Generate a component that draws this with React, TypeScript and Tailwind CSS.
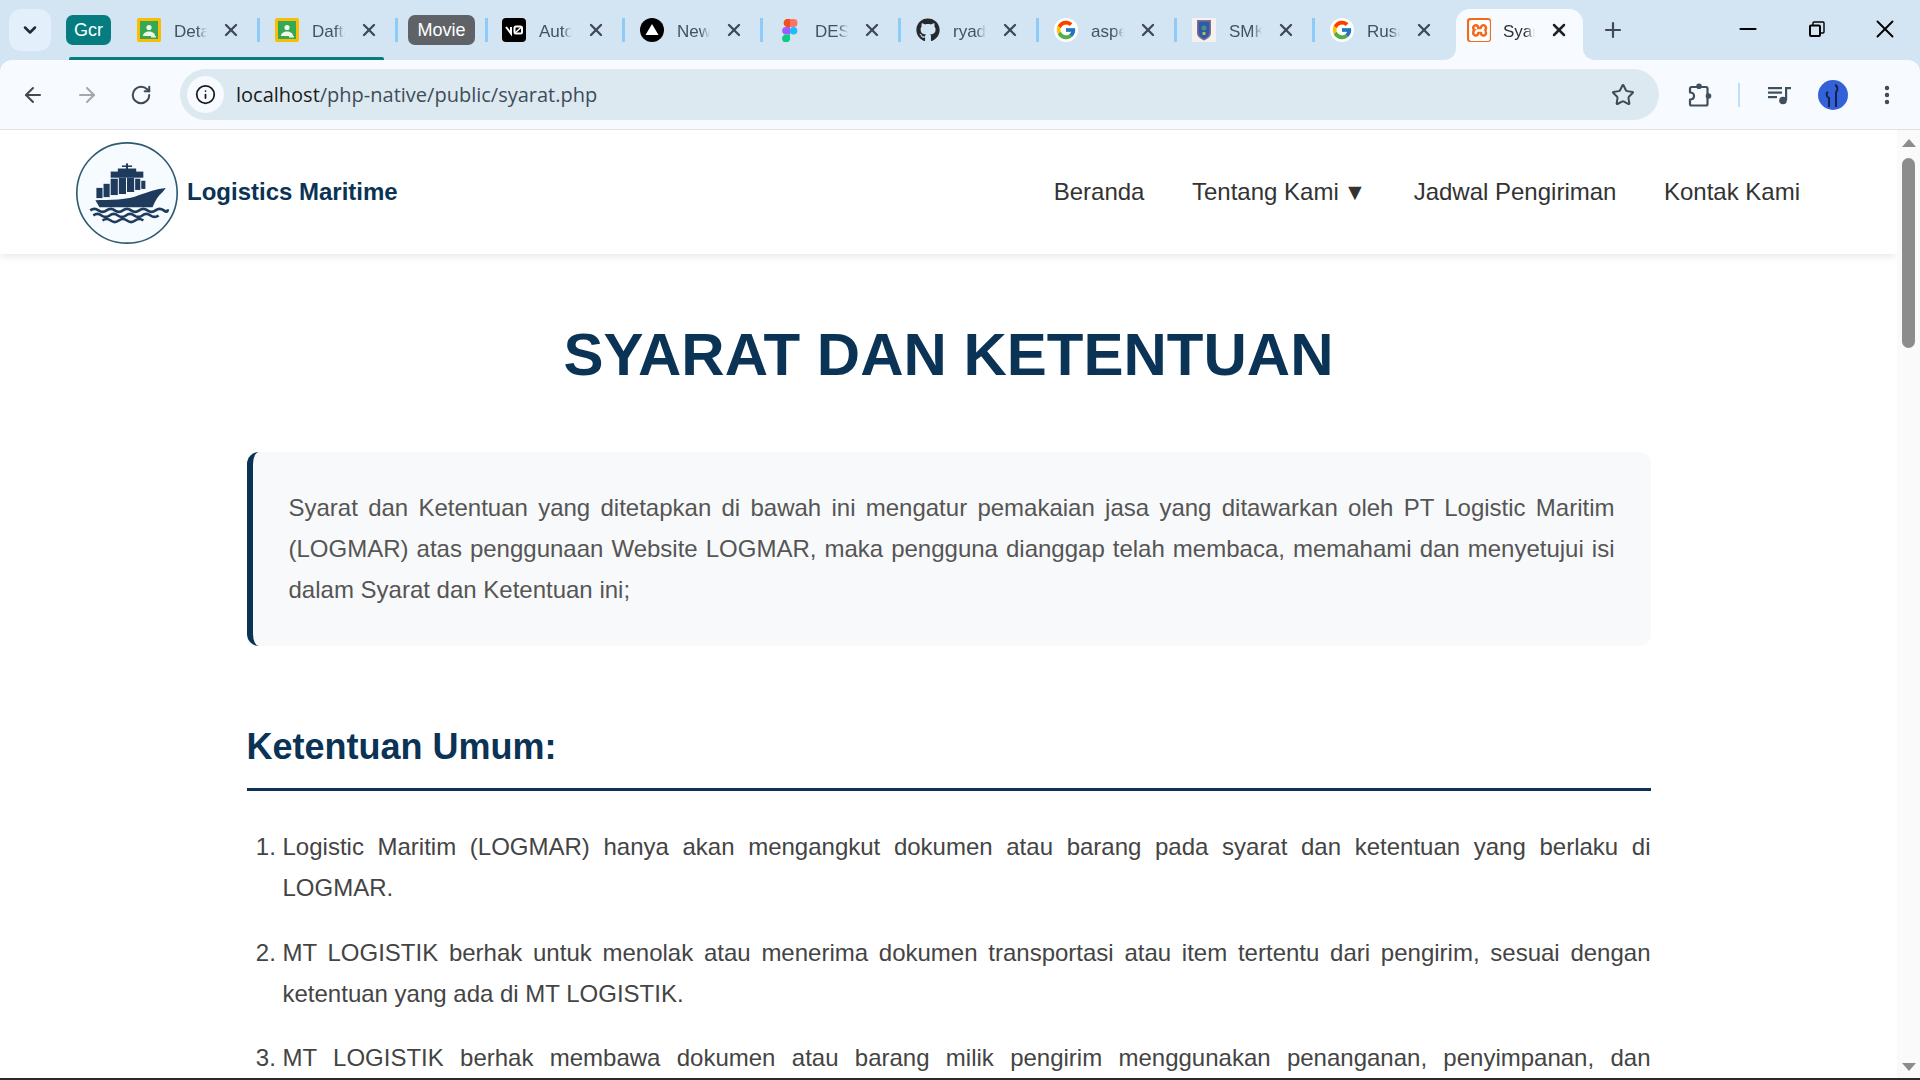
import type React from "react"
import { ArrowLeft, ArrowRight, ChevronDown, EllipsisVertical, Info, Minus, Plus, RotateCw, Star, X } from "lucide-react"
import { FaGithub } from "react-icons/fa"
import { FcGoogle } from "react-icons/fc"
import { SiXampp } from "react-icons/si"

const ClassroomIcon = () => (
  <svg width="24" height="24" viewBox="0 0 24 24">
    <rect x="0" y="0" width="24" height="24" rx="2" fill="#fbbc04" />
    <rect x="3" y="3" width="18" height="18" fill="#34a853" />
    <circle cx="12" cy="9.5" r="2.6" fill="#f1f8e9" />
    <path d="M6 18c0-3 3-4.5 6-4.5s6 1.500 6 4.500z" fill="#f1f8e9" />
    <rect x="14" y="18" width="5" height="1.500" fill="#e8f5e9" />
  </svg>
)

const V0Icon = () => (
  <svg width="24" height="24" viewBox="0 0 24 24">
    <rect width="24" height="24" rx="4" fill="#000" />
    <path d="M4 9l5 6.500V9" fill="none" stroke="#fff" strokeWidth="2" />
    <rect x="12.500" y="8.500" width="7.500" height="7" rx="1.500" fill="none" stroke="#fff" strokeWidth="2" />
    <path d="M13 15l6.500-6" stroke="#fff" strokeWidth="1.500" />
  </svg>
)

const TriangleIcon = () => (
  <svg width="24" height="24" viewBox="0 0 24 24">
    <circle cx="12" cy="12" r="12" fill="#000" />
    <path d="M12 6l6.500 11h-13z" fill="#fff" />
  </svg>
)

const FigmaIcon = () => (
  <svg width="24" height="24" viewBox="0 0 24 24">
    <path d="M12 1H8a4.500 4.500 0 0 0 0 8h4z" fill="#f24e1e" />
    <path d="M12 1h3.500a4 4 0 0 1 0 8H12z" fill="#ff7262" />
    <path d="M12 9H8a3.800 3.800 0 0 0 0 7.600h4z" fill="#a259ff" />
    <circle cx="15.500" cy="12.800" r="3.800" fill="#1abcfe" />
    <path d="M8 16.600h4v3.400a4 4 0 1 1-4-3.400z" fill="#0acf83" />
  </svg>
)

const ShieldIcon = () => (
  <svg width="24" height="24" viewBox="0 0 24 24">
    <rect width="24" height="24" fill="#f4f1f1" />
    <path d="M5 2h14v13c0 4-4 6-7 7.500C9 21 5 19 5 15z" fill="#8d6e8a" />
    <path d="M6.500 3.500h11V15c0 3-3 4.500-5.500 6-2.500-1.500-5.500-3-5.500-6z" fill="#2a5caa" />
    <circle cx="12" cy="10" r="2.500" fill="#4f8f7a" />
    <rect x="10.500" y="14" width="3" height="3" fill="#c7b45a" />
  </svg>
)

const XamppIcon = () => (
  <div className="w-6 h-6 rounded-[3px] bg-[#f26b1d] flex items-center justify-center">
    <SiXampp size={21} color="#fff" />
  </div>
)

const PuzzleIcon = () => (
  <svg width="26" height="26" viewBox="0 0 26 26" className="ml-[28px] flex-none">
    <path d="M3 6.500a1.500 1.500 0 0 1 1.500-1.500H19a1.500 1.500 0 0 1 1.500 1.500V22a1.500 1.500 0 0 1-1.500 1.500H4.500A1.500 1.500 0 0 1 3 22v-4.500c2.500 0 4-1.500 4-3.500s-1.500-3.500-4-3.500z" fill="none" stroke="#3f4f5c" strokeWidth="2.200" strokeLinejoin="round" />
    <circle cx="12" cy="4.200" r="2.800" fill="#3f4f5c" />
    <circle cx="21.500" cy="14" r="2.800" fill="#3f4f5c" />
  </svg>
)

const MediaIcon = () => (
  <svg width="24" height="20" viewBox="0 0 24 20" className="ml-[28px] flex-none" fill="#3f4f5c">
    <rect x="0" y="2" width="14" height="2.200" />
    <rect x="0" y="6.500" width="14" height="2.200" />
    <rect x="0" y="11" width="9" height="2.200" />
    <circle cx="15" cy="15.500" r="3.800" />
    <rect x="17" y="2" width="2.200" height="13" />
    <rect x="17" y="2" width="6" height="2.200" />
  </svg>
)

const ShipLogo = () => (
  <svg viewBox="0 0 100 100" className="w-[102px] h-[102px] flex-none mt-[1px]">
    <circle cx="50" cy="50" r="49.200" fill="#f5fbff" stroke="#2f5a70" strokeWidth="1.600" />
    <g fill="#1e3a5c">
      <rect x="49" y="21" width="2" height="6" />
      <rect x="45" y="23" width="10" height="1.500" />
      <rect x="41" y="26" width="18" height="4" />
      <rect x="34" y="29" width="32" height="6" />
      <rect x="34" y="36" width="7" height="16" />
      <rect x="42" y="35" width="7" height="16" />
      <rect x="50" y="35" width="7" height="14" />
      <rect x="58" y="36" width="5" height="11" />
      <rect x="64" y="38" width="4" height="8" />
      <rect x="27" y="41" width="6" height="13" />
      <rect x="20" y="45" width="6" height="10" />
      <path d="M19 57c14 0 32 0 43-5 8-3 17-6 26-7l-3 4c-4 3-7 8-10 15H23z" />
    </g>
    <g fill="none" stroke="#1e3a5c" strokeWidth="2.600">
      <path d="M14 67q4-3 8 0t8 0 8 0 8 0 8 0 8 0 8 0 8 0 8 0 4-1" />
      <path d="M17 72q4-3 8 0t8 0 8 0 8 0 8 0 8 0 8 0 8 0" />
      <path d="M26 77q4-3 8 0t8 0 8 0 8 0 8 0" />
    </g>
  </svg>
)

type TabItem = { label: string; icon: React.ReactNode; sep?: boolean }

const googleIcon = (
  <div className="w-6 h-6 rounded-full bg-white flex items-center justify-center">
    <FcGoogle size={22} />
  </div>
)

const firstTabs: TabItem[] = [
  { label: "Detail", icon: <ClassroomIcon />, sep: true },
  { label: "Daftar", icon: <ClassroomIcon />, sep: true },
]

const otherTabs: TabItem[] = [
  { label: "Auto", icon: <V0Icon />, sep: true },
  { label: "New", icon: <TriangleIcon />, sep: true },
  { label: "DESAIN", icon: <FigmaIcon />, sep: true },
  { label: "ryad", icon: <FaGithub size={24} color="#24292f" />, sep: true },
  { label: "aspek", icon: googleIcon, sep: true },
  { label: "SMK", icon: <ShieldIcon />, sep: true },
  { label: "Rusak", icon: googleIcon },
]

const Tab = ({ tab }: { tab: TabItem }) => (
  <div className="relative w-[138px] h-[42px] pl-[16px] flex items-center flex-none">
    <div className="w-6 h-6 flex-none flex items-center justify-center">{tab.icon}</div>
    <span className="ml-[13px] mt-[3px] w-[33px] overflow-hidden whitespace-nowrap text-[17px] text-[#45525e] [mask-image:linear-gradient(to_right,#000_70%,transparent)]">
      {tab.label}
    </span>
    <X size={20} strokeWidth={2.800} className="ml-[14px] flex-none text-[#3f4a55]" />
    {tab.sep && <div className="absolute right-[-1px] top-[9px] w-[3px] h-[24px] bg-[#8ecbf7]" />}
  </div>
)

const TabStrip = () => (
  <div className="relative h-[60px] flex-none bg-[#d3e4f3] flex items-start pt-[9px] pl-[9px]">
    <div className="w-[42px] h-[42px] rounded-[12px] bg-[#e3f0fc] flex items-center justify-center flex-none">
      <ChevronDown size={20} strokeWidth={3} className="text-[#1f2a33]" />
    </div>
    <div className="ml-[15px] mt-[6px] w-[45px] h-[30px] rounded-[7px] bg-[#047c80] text-white text-[18px] flex items-center justify-center flex-none">
      Gcr
    </div>
    <div className="ml-[10px] flex">
      {firstTabs.map((t) => (
        <Tab key={t.label} tab={t} />
      ))}
    </div>
    <div className="relative ml-[11px] mt-[6px] w-[67px] h-[30px] rounded-[7px] bg-[#5f6368] text-white text-[18px] flex items-center justify-center flex-none">
      Movie
      <div className="absolute right-[-13px] top-[3px] w-[3px] h-[24px] bg-[#8ecbf7]" />
    </div>
    <div className="ml-[11px] flex">
      {otherTabs.map((t) => (
        <Tab key={t.label} tab={t} />
      ))}
    </div>
    {/* Active tab */}
    <div className="relative ml-[4px] w-[127px] h-[51px] pb-[9px] bg-[#f7faff] rounded-t-[14px] pl-[11px] flex items-center flex-none">
      <svg className="absolute left-[-12px] bottom-0" width="12" height="12" viewBox="0 0 12 12">
        <path d="M12 0v12H0c7 0 12-5 12-12z" fill="#f7faff" />
      </svg>
      <svg className="absolute right-[-12px] bottom-0" width="12" height="12" viewBox="0 0 12 12">
        <path d="M0 0v12h12C5 12 0 7 0 0z" fill="#f7faff" />
      </svg>
      <XamppIcon />
      <span className="ml-[12px] mt-[3px] w-[32px] overflow-hidden whitespace-nowrap text-[17px] text-[#2b3238] [mask-image:linear-gradient(to_right,#000_70%,transparent)]">
        Syarat
      </span>
      <X size={20} strokeWidth={3} className="ml-[14px] flex-none text-[#1f2328]" />
    </div>
    <div className="ml-[15px] mt-[6px] w-[30px] h-[30px] flex items-center justify-center flex-none">
      <Plus size={24} strokeWidth={2.200} className="text-[#3f4a55]" />
    </div>
    <div className="ml-auto mt-[-9px] h-[58px] flex flex-none">
      <div className="w-[69px] flex items-center justify-center"><Minus size={26} strokeWidth={1.800} className="text-black" /></div>
      <div className="w-[69px] flex items-center justify-center">
        <svg width="16" height="16" viewBox="0 0 16 16" fill="none" stroke="#000" strokeWidth="2">
          <rect x="1" y="4.500" width="10" height="10.500" rx="1" />
          <path d="M4 4V2a1 1 0 0 1 1-1h9a1 1 0 0 1 1 1v9a1 1 0 0 1-1 1h-3" strokeWidth="1.400" />
        </svg>
      </div>
      <div className="w-[69px] flex items-center justify-center pr-[1px]"><X size={30} strokeWidth={1.500} className="text-black" /></div>
    </div>
    <div className="absolute left-[69px] top-[57px] w-[315px] h-[3px] rounded-t-[2px] bg-[#047c80]" />
  </div>
)

const Toolbar = () => (
  <div className="h-[70px] flex-none bg-[#d3e4f3]">
    <div className="h-[69px] rounded-t-[12px] bg-[#f7faff] flex items-center pl-[6px] pb-[9px] pt-[9px]">
      <div className="w-[54px] flex justify-center"><ArrowLeft size={24} strokeWidth={2} className="text-[#3f4a55]" /></div>
      <div className="w-[54px] flex justify-center"><ArrowRight size={24} strokeWidth={2} className="text-[#a3a8ad]" /></div>
      <div className="w-[54px] flex justify-center"><RotateCw size={22} strokeWidth={2.200} className="text-[#3f4a55]" /></div>
      <div className="ml-[12px] w-[1479px] h-[51px] rounded-full bg-[#dde9f1] flex items-center pl-[7px] pr-[24px] flex-none">
        <div className="w-[37px] h-[37px] rounded-full bg-[#f7faff] flex items-center justify-center flex-none">
          <Info size={21} strokeWidth={2} className="text-[#1a1a1a]" />
        </div>
        <span className="ml-[12px] text-[20px] text-[#3d4c59] font-['Open_Sans',sans-serif]">
          <span className="text-[#1a1a1a]">localhost</span>/php-native/public/syarat.php
        </span>
        <Star size={24} strokeWidth={2} className="ml-auto text-[#3f4a55]" />
      </div>
      <PuzzleIcon />
      <div className="ml-[25px] w-[2px] h-[24px] bg-[#bfe0fa] flex-none" />
      <MediaIcon />
      <div className="ml-[26px] w-[30px] h-[30px] rounded-full bg-[#3361d8] flex items-center justify-center flex-none">
        <svg width="18" height="28" viewBox="0 0 18 28" fill="none" stroke="#14214f" strokeWidth="2">
          <path d="M11 4c3 1 3 6 1 7v15" />
          <path d="M4 11c-2 1-2 5 1 6v9" />
        </svg>
      </div>
      <EllipsisVertical size={24} strokeWidth={2.400} className="ml-[27px] flex-none text-[#3f4a55]" />
    </div>
    <div className="h-px bg-[#dfe3e8]" />
  </div>
)

const NavBar = () => (
  <header className="h-[124px] flex-none bg-white shadow-[0_2px_8px_rgba(0,0,0,0.1)] flex items-center justify-between pl-[76px] pr-[97px] relative">
    <div className="flex items-center">
      <ShipLogo />
      <span className="ml-[9px] text-[24px] font-bold text-[#0a3355]">Logistics Maritime</span>
    </div>
    <nav className="flex items-center gap-[47.500px] text-[24px] text-[#333]">
      <span>Beranda</span>
      <span>Tentang Kami <span className="ml-[-2px] text-[23px]">▼</span></span>
      <span>Jadwal Pengiriman</span>
      <span>Kontak Kami</span>
    </nav>
  </header>
)

const items = [
  "Logistic Maritim (LOGMAR) hanya akan mengangkut dokumen atau barang pada syarat dan ketentuan yang berlaku di LOGMAR.",
  "MT LOGISTIK berhak untuk menolak atau menerima dokumen transportasi atau item tertentu dari pengirim, sesuai dengan ketentuan yang ada di MT LOGISTIK.",
  "MT LOGISTIK berhak membawa dokumen atau barang milik pengirim menggunakan penanganan, penyimpanan, dan pengangkutan yang sesuai dengan ketentuan yang berlaku.",
]

const Scrollbar = () => (
  <div className="w-[23px] flex-none bg-[#fafafa] flex flex-col items-center pt-[9px]">
    <div className="w-0 h-0 border-x-[7.500px] border-x-transparent border-b-[8px] border-b-[#8c8c8c]" />
    <div className="mt-[11px] w-[13px] h-[190px] rounded-full bg-[#8c8c8c]" />
    <div className="mt-auto mb-[7px] w-0 h-0 border-x-[7.500px] border-x-transparent border-t-[8px] border-t-[#8c8c8c]" />
  </div>
)

export default function App() {
  return (
    <div className="h-screen w-full overflow-hidden flex flex-col bg-white font-['Liberation_Sans',Arial,sans-serif]">
      <TabStrip />
      <Toolbar />
      <div className="flex-1 min-h-0 flex">
        <div className="flex-1 min-w-0 flex flex-col overflow-hidden">
          <NavBar />
          <main className="w-[1404px] mx-auto">
            <h1 className="mt-[65px] text-center text-[60px] leading-[72px] font-bold text-[#0a3355]">SYARAT DAN KETENTUAN</h1>
            <div className="mt-[61px] border-l-[6px] border-[#0a3355] rounded-[12px] bg-[#f8f9fa] py-[36px] pl-[36px] pr-[36px]">
              <p className="text-justify text-[24px] leading-[40.800px] text-[#555]">
                Syarat dan Ketentuan yang ditetapkan di bawah ini mengatur pemakaian jasa yang ditawarkan oleh PT Logistic Maritim (LOGMAR) atas penggunaan Website LOGMAR, maka pengguna dianggap telah membaca, memahami dan menyetujui isi dalam Syarat dan Ketentuan ini;
              </p>
            </div>
            <h2 className="mt-[79px] pb-[19px] border-b-[3px] border-[#0a3355] text-[36px] leading-[44px] font-bold text-[#0a3355]">Ketentuan Umum:</h2>
            <ol className="mt-[36px] list-decimal pl-[36px] text-[24px] leading-[40.800px] text-[#444]">
              {items.map((item) => (
                <li key={item} className="mb-[23.800px] text-justify">{item}</li>
              ))}
            </ol>
          </main>
        </div>
        <Scrollbar />
      </div>
      <div className="h-[2px] flex-none bg-[#2a2a2a]" />
    </div>
  )
}
